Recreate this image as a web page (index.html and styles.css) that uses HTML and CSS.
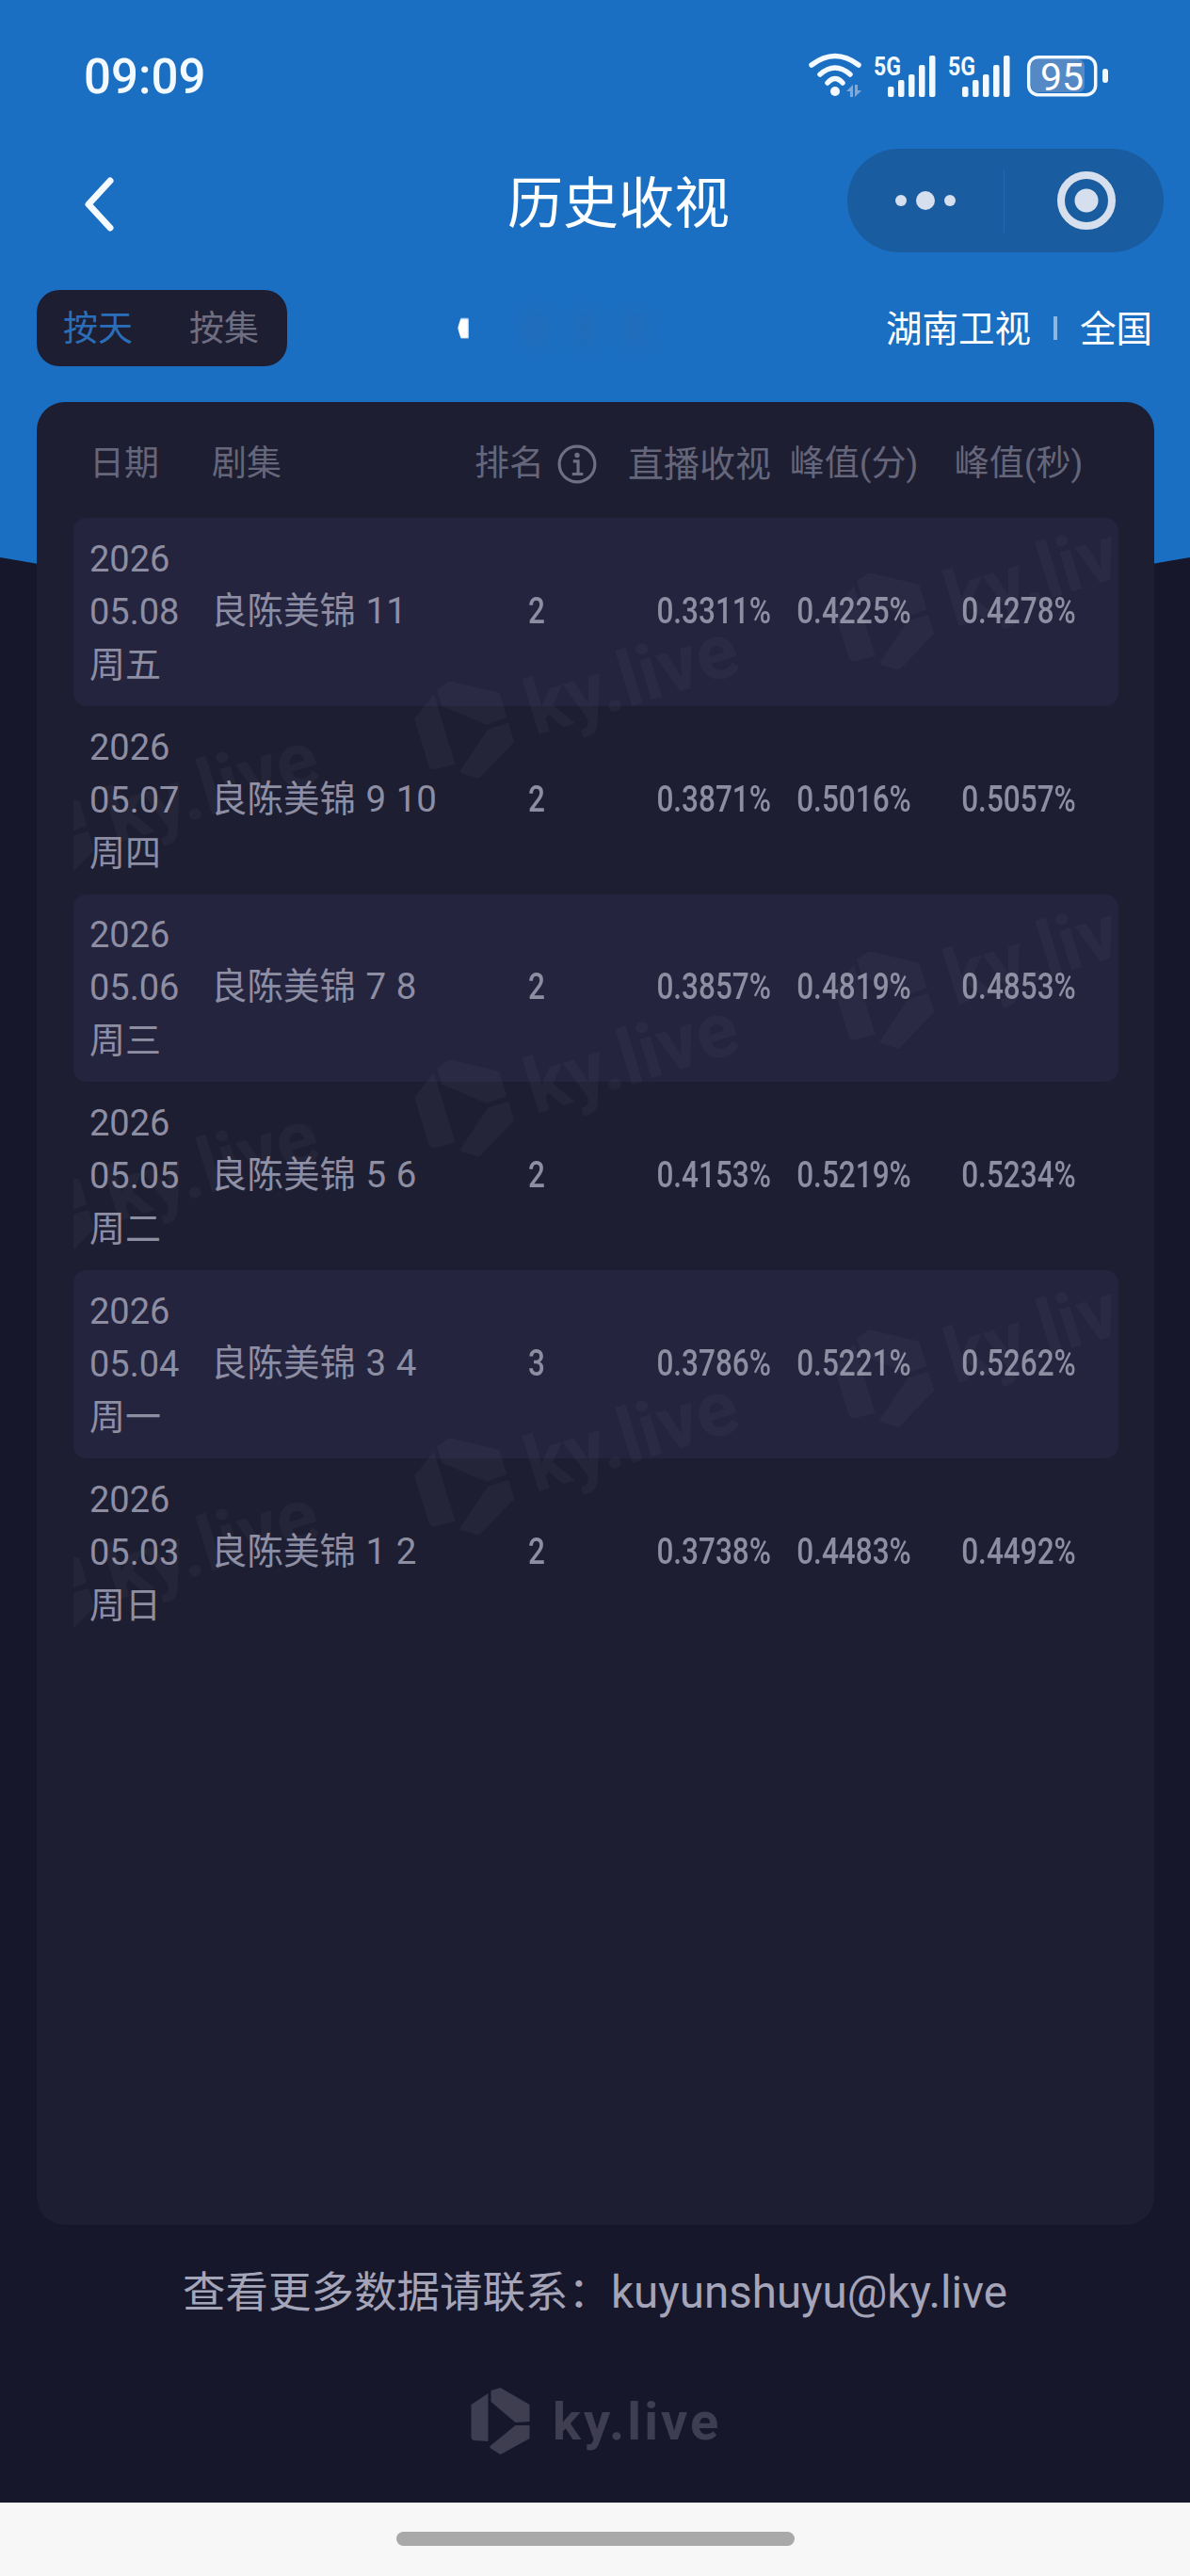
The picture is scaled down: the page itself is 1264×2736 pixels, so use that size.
FILE: index.html
```html
<!DOCTYPE html>
<html lang="zh-CN">
<head>
    <meta charset="UTF-8">
    <meta name="viewport" content="width=device-width, initial-scale=1.0">
    <title>历史收视</title>
    <link rel="stylesheet" href="styles.css">
</head>
<body>
    <div class="page">
        <!-- blue header background, sits behind everything -->
        <svg class="hero-bg" width="1264" height="720" viewBox="0 0 1264 720"><path d="M0 0H1264V592Q632 706 0 592Z" fill="#1b6fc2"/></svg>

        <div class="status-bar">
            <span class="time">09:09</span>
            <svg class="status-icons" width="325" height="60" viewBox="855 50 325 60">
                <g fill="none" stroke="#f2f9ff" stroke-width="5.5" stroke-linecap="round">
                    <path d="M862 69Q887 50 912 69"/>
                    <path d="M871 79Q887 65 903 79"/>
                    <path d="M879 88Q887 79 895 88"/>
                </g>
                <circle cx="887" cy="97" r="5" fill="#f2f9ff"/>
                <path d="M906 90V103H903V97H899Z M908 90V103L915 96H911V90Z" fill="#7fa9d9"/>
                <g fill="#f2f9ff">
                    <text class="net" x="928" y="80" textLength="29" lengthAdjust="spacingAndGlyphs">5G</text>
                    <rect x="943" y="92" width="6.5" height="11" rx="2"/>
                    <rect x="954" y="85" width="6.5" height="18" rx="2"/>
                    <rect x="965" y="79" width="6.5" height="24" rx="2"/>
                    <rect x="976" y="69" width="6.5" height="34" rx="2"/>
                    <rect x="987" y="59" width="6.5" height="44" rx="2"/>
                    <text class="net" x="1007" y="80" textLength="29" lengthAdjust="spacingAndGlyphs">5G</text>
                    <rect x="1022" y="92" width="6.5" height="11" rx="2"/>
                    <rect x="1033" y="85" width="6.5" height="18" rx="2"/>
                    <rect x="1044" y="79" width="6.5" height="24" rx="2"/>
                    <rect x="1055" y="69" width="6.5" height="34" rx="2"/>
                    <rect x="1066" y="59" width="6.5" height="44" rx="2"/>
                </g>
                <rect x="1095" y="63" width="57" height="35" rx="7" fill="#5589c5"/>
                <rect x="1092.7" y="60.7" width="71" height="40" rx="10" fill="none" stroke="#f2f9ff" stroke-width="3.5"/>
                <rect x="1171" y="73" width="6" height="15" rx="3" fill="#f2f9ff"/>
                <text class="batt" x="1128" y="95.5" text-anchor="middle">95</text>
            </svg>
        </div>

        <div class="nav">
            <svg class="back" width="34" height="58" viewBox="0 0 34 58"><path d="M28 4L5 29L28 54" fill="none" stroke="#f5faff" stroke-width="7" stroke-linecap="round" stroke-linejoin="round"/></svg>
            <h1 class="title">历史收视</h1>
            <div class="capsule">
                <div class="capsule-dots">
                    <span class="dot"></span>
                    <span class="dot big"></span>
                    <span class="dot"></span>
                </div>
                <div class="capsule-target"><span></span></div>
            </div>
        </div>

        <div class="toolbar">
            <div class="toggle">
                <span class="on">按天</span>
                <span>按集</span>
            </div>
            <div class="loading">
                <span class="spark"></span>
                <span class="haze"></span>
                <span class="haze"></span>
                <span class="haze"></span>
            </div>
            <div class="scope">
                <span>湖南卫视</span>
                <i></i>
                <span>全国</span>
            </div>
        </div>

        <div class="panel">
            <div class="cols head">
                <div>日期</div>
                <div>剧集</div>
                <div class="rank-head">排名
                    <svg width="42" height="42" viewBox="0 0 40 40">
                        <circle cx="20" cy="20" r="18" fill="none" stroke="#6f6f83" stroke-width="3"/>
                        <circle cx="20" cy="11" r="2.6" fill="#6f6f83"/>
                        <path d="M16 17H21V29M15 30H26" fill="none" stroke="#6f6f83" stroke-width="3"/>
                    </svg>
                </div>
                <div class="r">直播收视</div>
                <div class="c">峰值(分)</div>
                <div class="c">峰值(秒)</div>
            </div>

            <div class="rows">
                <div class="cols row alt">
                    <div>2026<br>05.08<br>周五</div>
                    <div class="ep">良陈美锦 11</div>
                    <div class="c num">2</div>
                    <div class="r num">0.3311%</div>
                    <div class="c num">0.4225%</div>
                    <div class="c num">0.4278%</div>
                </div>
                <div class="cols row">
                    <div>2026<br>05.07<br>周四</div>
                    <div class="ep">良陈美锦 9 10</div>
                    <div class="c num">2</div>
                    <div class="r num">0.3871%</div>
                    <div class="c num">0.5016%</div>
                    <div class="c num">0.5057%</div>
                </div>
                <div class="cols row alt">
                    <div>2026<br>05.06<br>周三</div>
                    <div class="ep">良陈美锦 7 8</div>
                    <div class="c num">2</div>
                    <div class="r num">0.3857%</div>
                    <div class="c num">0.4819%</div>
                    <div class="c num">0.4853%</div>
                </div>
                <div class="cols row">
                    <div>2026<br>05.05<br>周二</div>
                    <div class="ep">良陈美锦 5 6</div>
                    <div class="c num">2</div>
                    <div class="r num">0.4153%</div>
                    <div class="c num">0.5219%</div>
                    <div class="c num">0.5234%</div>
                </div>
                <div class="cols row alt">
                    <div>2026<br>05.04<br>周一</div>
                    <div class="ep">良陈美锦 3 4</div>
                    <div class="c num">3</div>
                    <div class="r num">0.3786%</div>
                    <div class="c num">0.5221%</div>
                    <div class="c num">0.5262%</div>
                </div>
                <div class="cols row">
                    <div>2026<br>05.03<br>周日</div>
                    <div class="ep">良陈美锦 1 2</div>
                    <div class="c num">2</div>
                    <div class="r num">0.3738%</div>
                    <div class="c num">0.4483%</div>
                    <div class="c num">0.4492%</div>
                </div>

                <!-- watermark repeats over the rows -->
                <div class="marks">
                    <div class="tile">
                        <div class="mark m1"><svg width="96" height="108" viewBox="0 0 62 71"><use href="#logo"/></svg><span>ky.live</span></div>
                        <div class="mark m2"><svg width="96" height="108" viewBox="0 0 62 71"><use href="#logo"/></svg><span>ky.live</span></div>
                        <div class="mark m3"><svg width="96" height="108" viewBox="0 0 62 71"><use href="#logo"/></svg><span>ky.live</span></div>
                    </div>
                    <div class="tile">
                        <div class="mark m1"><svg width="96" height="108" viewBox="0 0 62 71"><use href="#logo"/></svg><span>ky.live</span></div>
                        <div class="mark m2"><svg width="96" height="108" viewBox="0 0 62 71"><use href="#logo"/></svg><span>ky.live</span></div>
                        <div class="mark m3"><svg width="96" height="108" viewBox="0 0 62 71"><use href="#logo"/></svg><span>ky.live</span></div>
                    </div>
                    <div class="tile">
                        <div class="mark m1"><svg width="96" height="108" viewBox="0 0 62 71"><use href="#logo"/></svg><span>ky.live</span></div>
                        <div class="mark m2"><svg width="96" height="108" viewBox="0 0 62 71"><use href="#logo"/></svg><span>ky.live</span></div>
                        <div class="mark m3"><svg width="96" height="108" viewBox="0 0 62 71"><use href="#logo"/></svg><span>ky.live</span></div>
                    </div>
                </div>
            </div>
        </div>

        <div class="contact">查看更多数据请联系：<span>kuyunshuyu@ky.live</span></div>

        <div class="brand">
            <svg width="63" height="71" viewBox="0 0 62 71">
                <g id="logo">
                    <path d="M0 18L18 6V57L3 56Q0 55 0 52Z"/>
                    <path d="M21 3L31 0L62 18V36L47 37L21 15Z"/>
                    <path d="M62 40V54L31 71L20 64V62L47 40Z"/>
                </g>
            </svg>
            <span>ky.live</span>
        </div>

        <div class="home-bar"><span></span></div>
    </div>
</body>
</html>
```

FILE: styles.css
```css
body {
    margin: 0;
    background: #17172c;
    font-family: Roboto, "Noto Sans CJK SC", sans-serif;
}
.page {
    position: relative;
    width: 1264px;
    height: 2736px;
    overflow: hidden;
    display: flex;
    flex-direction: column;
}
.hero-bg {
    position: absolute;
    top: 0;
    left: 0;
}
.status-bar, .nav, .toolbar, .panel, .contact, .brand, .home-bar {
    position: relative;
}

/* status bar */
.status-bar {
    height: 108px;
    padding: 50px 84px 0 89px;
    display: flex;
    justify-content: space-between;
}
.time {
    margin-top: 2px;
    color: #f2f9ff;
    font-size: 51px;
    font-weight: 500;
    line-height: 60px;
}
.status-icons {
    display: block;
}
.net {
    font-size: 27px;
    font-weight: 700;
}
.batt {
    fill: #fff;
    font-size: 41px;
}

/* nav */
.nav {
    height: 110px;
    padding-left: 89px;
    display: flex;
    align-items: center;
}
.back {
    flex: none;
    margin-top: 7px;
}
.title {
    margin: 7px 0 0 416px;
    width: 236px;
    color: #fff;
    font-size: 59px;
    font-weight: 400;
    line-height: 70px;
    white-space: nowrap;
}
.capsule {
    margin-left: 125px;
    width: 336px;
    height: 110px;
    border-radius: 55px;
    background: #195c9f;
    display: flex;
    align-items: center;
}
.capsule-dots {
    width: 167px;
    height: 67px;
    box-sizing: border-box;
    border-right: 1px solid #2268ad;
    display: flex;
    align-items: center;
    justify-content: center;
    gap: 10px;
}
.dot {
    width: 12px;
    height: 12px;
    border-radius: 50%;
    background: #d5dfee;
}
.dot.big {
    width: 20px;
    height: 20px;
}
.capsule-target {
    flex: 1;
    display: flex;
    justify-content: center;
    padding-left: 4px;
}
.capsule-target span {
    width: 46px;
    height: 46px;
    border: 8px solid #d5dfee;
    border-radius: 50%;
    background: radial-gradient(circle, #d5dfee 0 12px, transparent 13px);
}

/* toolbar */
.toolbar {
    margin-top: 40px;
    height: 81px;
    padding: 0 40px 0 39px;
    display: flex;
    align-items: center;
}
.toggle {
    width: 266px;
    height: 81px;
    box-sizing: border-box;
    padding: 0 30px 5px 28px;
    border-radius: 24px;
    background: #1e1e33;
    color: #6e6e80;
    font-size: 37px;
    display: flex;
    align-items: center;
    justify-content: space-between;
}
.toggle .on {
    color: #2a6eb9;
}
.loading {
    margin-left: 181px;
    display: flex;
    align-items: center;
    gap: 30px;
}
.spark {
    width: 12px;
    height: 22px;
    background: #fff;
    clip-path: polygon(30% 0, 100% 0, 100% 100%, 30% 100%, 0 50%);
    filter: blur(1px);
    margin-right: 30px;
}
.haze {
    width: 22px;
    height: 34px;
    background: #2a68ad;
    filter: blur(10px);
    opacity: .5;
}
.scope {
    margin-left: auto;
    padding-bottom: 5px;
    color: #fff;
    font-size: 38.5px;
    display: flex;
    align-items: center;
}
.scope i {
    width: 4px;
    height: 25px;
    margin: 5px 24px 0 24px;
    background: rgba(255, 255, 255, .5);
}

/* table */
.panel {
    margin: 38px 38px 0 39px;
    height: 1936px;
    padding: 0 38px 0 39px;
    box-sizing: border-box;
    border-radius: 30px;
    background: #1e1e33;
}
.cols {
    display: grid;
    grid-template-columns: 130px 281px 128px 185px 176px 174px;
    align-items: center;
    padding: 0 19px 0 17px;
}
.head {
    padding-top: 45px;
    padding-bottom: 36px;
    color: #66667a;
    font-size: 37px;
    line-height: 36px;
}
.head .r {
    font-size: 38px;
}
.rank-head {
    margin-left: -2px;
    display: flex;
    align-items: center;
    gap: 14px;
}
.r {
    text-align: right;
}
.c {
    text-align: center;
}
.rows {
    position: relative;
}
.row {
    height: 199.8px;
    border-radius: 14px;
    color: #8e8ea3;
    font-size: 38px;
    line-height: 56px;
}
.row.alt {
    background: #25243f;
}
.ep {
    margin-left: -1px;
    padding-bottom: 2px;
    font-size: 38.5px;
    word-spacing: 1px;
}
/* numbers are a narrow DIN-like face in the app */
.num {
    padding-bottom: 2px;
    font-size: 38px;
    font-weight: 500;
    transform: scaleX(.83);
}
.num.r {
    transform-origin: right center;
}
.marks {
    position: absolute;
    top: 0;
    left: 0;
    width: 1110px;
    height: 1200px;
    overflow: hidden;
}
.tile {
    position: relative;
    height: 402px;
}
.mark {
    position: absolute;
    display: flex;
    align-items: center;
    gap: 22px;
    transform: rotate(-17deg);
    transform-origin: 48px 54px;
    color: rgba(255, 255, 255, .03);
    fill: rgba(255, 255, 255, .03);
    font-size: 82px;
    font-weight: 700;
    line-height: 108px;
    white-space: nowrap;
}
.m1 {
    left: -79px;
    top: 286px;
}
.m2 {
    left: 367px;
    top: 171px;
}
.m3 {
    left: 813px;
    top: 56px;
}

/* footer */
.contact {
    margin-top: 42px;
    color: #a5a5b9;
    font-size: 45.5px;
    line-height: 60px;
    text-align: center;
}
.contact span {
    font-size: 47.5px;
}
.brand {
    margin-top: 70px;
    height: 71px;
    padding-left: 500px;
    display: flex;
    align-items: center;
    gap: 24px;
    color: #3e3e50;
    fill: #3e3e50;
    font-size: 56px;
    font-weight: 700;
    letter-spacing: 3px;
}
.home-bar {
    margin-top: auto;
    height: 78px;
    background: #f7f7f7;
    display: flex;
    justify-content: center;
    padding-top: 31px;
    box-sizing: border-box;
}
.home-bar span {
    width: 423px;
    height: 15px;
    border-radius: 8px;
    background: #a9a9a9;
}
```
